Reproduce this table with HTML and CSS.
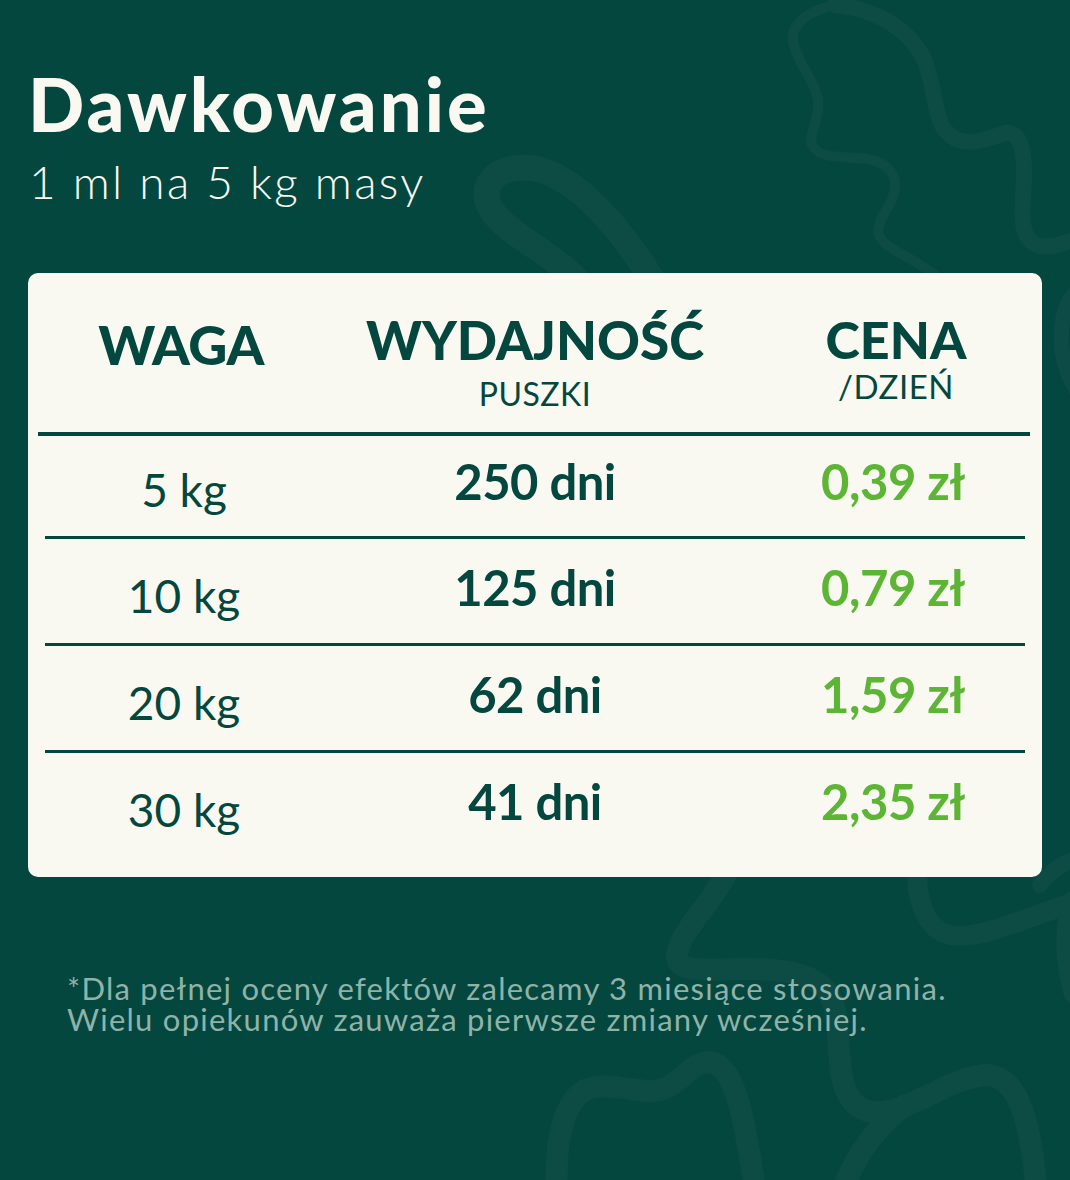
FILE: index.html
```html
<!DOCTYPE html>
<html lang="pl">
<head>
<meta charset="utf-8">
<title>Dawkowanie</title>
<link rel="stylesheet" href="styles.css">
</head>
<body>
<div class="page">
  <svg class="bg-deco" width="1070" height="1180" viewBox="0 0 1070 1180" aria-hidden="true">
    <g fill="none" stroke="#0d4c45" stroke-linecap="round" stroke-linejoin="round">
      <path stroke-width="10" d="M 835 5 C 810 10, 790 25, 793 40 C 795 60, 815 80, 818 100 C 820 120, 808 135, 812 145 C 818 158, 840 157, 860 158 C 880 160, 895 168, 895 185 C 895 205, 878 215, 878 232 C 880 248, 910 255, 935 275"/>
      <path stroke-width="16" d="M 835 5 C 870 8, 905 25, 922 55 C 935 80, 933 115, 945 130 C 960 150, 985 140, 1005 133 C 1020 130, 1025 150, 1024 180 C 1022 215, 1018 240, 1040 246 C 1055 248, 1065 242, 1080 238"/>
      <path stroke-width="15" d="M 1080 290 C 1058 300, 1052 360, 1080 395"/>
      <path stroke-width="26" d="M 588 295 C 565 255, 500 235, 488 203 C 480 178, 505 165, 532 168 C 575 175, 620 225, 662 295"/>
      <path stroke-width="22" d="M 728 870 C 715 900, 680 930, 677 955 C 676 972, 700 970, 740 969 C 790 968, 825 975, 834 1005 C 842 1040, 835 1075, 850 1098 C 862 1115, 880 1115, 900 1108 C 930 1097, 955 1078, 985 1075 C 1015 1075, 1030 1110, 1037 1195"/>
      <path stroke-width="22" d="M 905 1105 C 880 1125, 860 1145, 840 1195"/>
      <path stroke-width="22" d="M 557 1195 C 555 1150, 560 1105, 585 1090 C 610 1080, 640 1095, 660 1090 C 680 1085, 690 1062, 710 1062 C 735 1065, 745 1120, 756 1195"/>
      <path stroke-width="20" d="M 918 870 C 915 895, 925 930, 950 935 C 980 940, 1020 920, 1080 900"/>
      <path stroke-width="16" d="M 1040 885 C 1050 870, 1065 862, 1085 855"/>
      <path stroke-width="16" d="M 1070 900 C 1062 930, 1062 960, 1072 995"/>
    </g>
  </svg>

  <header class="intro">
    <h1 class="title">Dawkowanie</h1>
    <p class="subtitle">1 ml na 5 kg masy</p>
  </header>

  <section class="card">
    <div class="thead">
      <div class="th th-weight"><span class="th-main">WAGA</span></div>
      <div class="th th-yield"><span class="th-main">WYDAJNOŚĆ</span><span class="th-sub">PUSZKI</span></div>
      <div class="th th-price"><span class="th-main th-main-price">CENA</span><span class="th-sub th-sub-tight">/DZIEŃ</span></div>
    </div>

    <div class="row row-first">
      <div class="cell weight">5 kg</div>
      <div class="cell days">250 dni</div>
      <div class="cell price">0,39 zł</div>
    </div>
    <div class="row">
      <div class="cell weight">10 kg</div>
      <div class="cell days">125 dni</div>
      <div class="cell price">0,79 zł</div>
    </div>
    <div class="row">
      <div class="cell weight">20 kg</div>
      <div class="cell days">62 dni</div>
      <div class="cell price">1,59 zł</div>
    </div>
    <div class="row row-last">
      <div class="cell weight">30 kg</div>
      <div class="cell days">41 dni</div>
      <div class="cell price">2,35 zł</div>
    </div>
  </section>

  <div class="note">
    <p class="note-line">*Dla pełnej oceny efektów zalecamy 3 miesiące stosowania.</p>
    <p class="note-line">Wielu opiekunów zauważa pierwsze zmiany wcześniej.</p>
  </div>
</div>
</body>
</html>
```

FILE: styles.css
```css
html, body {
  margin: 0;
  padding: 0;
  background: #04473f;
}

.page {
  position: relative;
  width: 1070px;
  height: 1180px;
  overflow: hidden;
  box-sizing: border-box;
  padding: 67px 0 0 28px;
  font-family: "Lato", "Open Sans", sans-serif;
  color: #04473f;
}

.bg-deco {
  position: absolute;
  left: 0;
  top: 0;
  z-index: 0;
}

.intro,
.card,
.note {
  position: relative;
  z-index: 1;
}

.title {
  margin: 0;
  font-weight: 900;
  font-size: 74px;
  line-height: 74px;
  color: #f9f8f1;
  letter-spacing: 3px;
}

.subtitle {
  margin: 18px 0 0 1px;
  font-weight: 300;
  font-size: 46px;
  line-height: 46px;
  color: #f9f8f1;
  letter-spacing: 2.3px;
}

.card {
  margin-top: 68px;
  width: 1014px;
  height: 604px;
  box-sizing: border-box;
  padding: 0 12px 0 10px;
  background: #f9f8f1;
  border-radius: 10px;
}

.thead {
  display: grid;
  grid-template-columns: 286px 422px 284px;
  height: 163px;
  box-sizing: border-box;
  padding-top: 40px;
  border-bottom: 4px solid #04473f;
}

.th {
  display: flex;
  flex-direction: column;
  align-items: center;
}

.th-price {
  padding-left: 16px;
}

.th-main {
  font-weight: 900;
  font-size: 53px;
  line-height: 53px;
}

.th-weight .th-main {
  margin-top: 5px;
  font-size: 54px;
  line-height: 54px;
  letter-spacing: -0.5px;
}

.th-main-price {
  font-size: 52px;
  line-height: 52px;
}

.th-sub {
  margin-top: 9px;
  font-weight: 400;
  font-size: 32px;
  line-height: 38px;
  letter-spacing: 0.5px;
}

.th-sub-tight {
  margin-top: 6px;
  font-size: 33px;
  line-height: 30px;
}

.row {
  display: grid;
  grid-template-columns: 278px 424px 278px;
  margin: 0 5px 0 7px;
  height: 107px;
  box-sizing: border-box;
  border-bottom: 3px solid #04473f;
}

.row-first {
  height: 103px;
}

.row-last {
  height: 124px;
  border-bottom: none;
}

.cell {
  text-align: center;
}

.weight {
  padding-top: 34px;
  font-weight: 400;
  font-size: 46px;
  line-height: 46px;
}

.days {
  padding-top: 24px;
  font-weight: 700;
  font-size: 49px;
  line-height: 49px;
  letter-spacing: -0.5px;
}

.price {
  padding-top: 24px;
  padding-left: 14px;
  font-weight: 700;
  font-size: 49px;
  line-height: 49px;
  letter-spacing: -0.5px;
  color: #5db535;
}

.row-first .cell {
  margin-top: -3px;
}

.note {
  margin: 96px 0 0 39px;
  color: #8fb3a8;
}

.note-line {
  margin: 0;
  font-weight: 400;
  font-size: 31px;
  line-height: 31px;
  letter-spacing: 1.25px;
}
```
